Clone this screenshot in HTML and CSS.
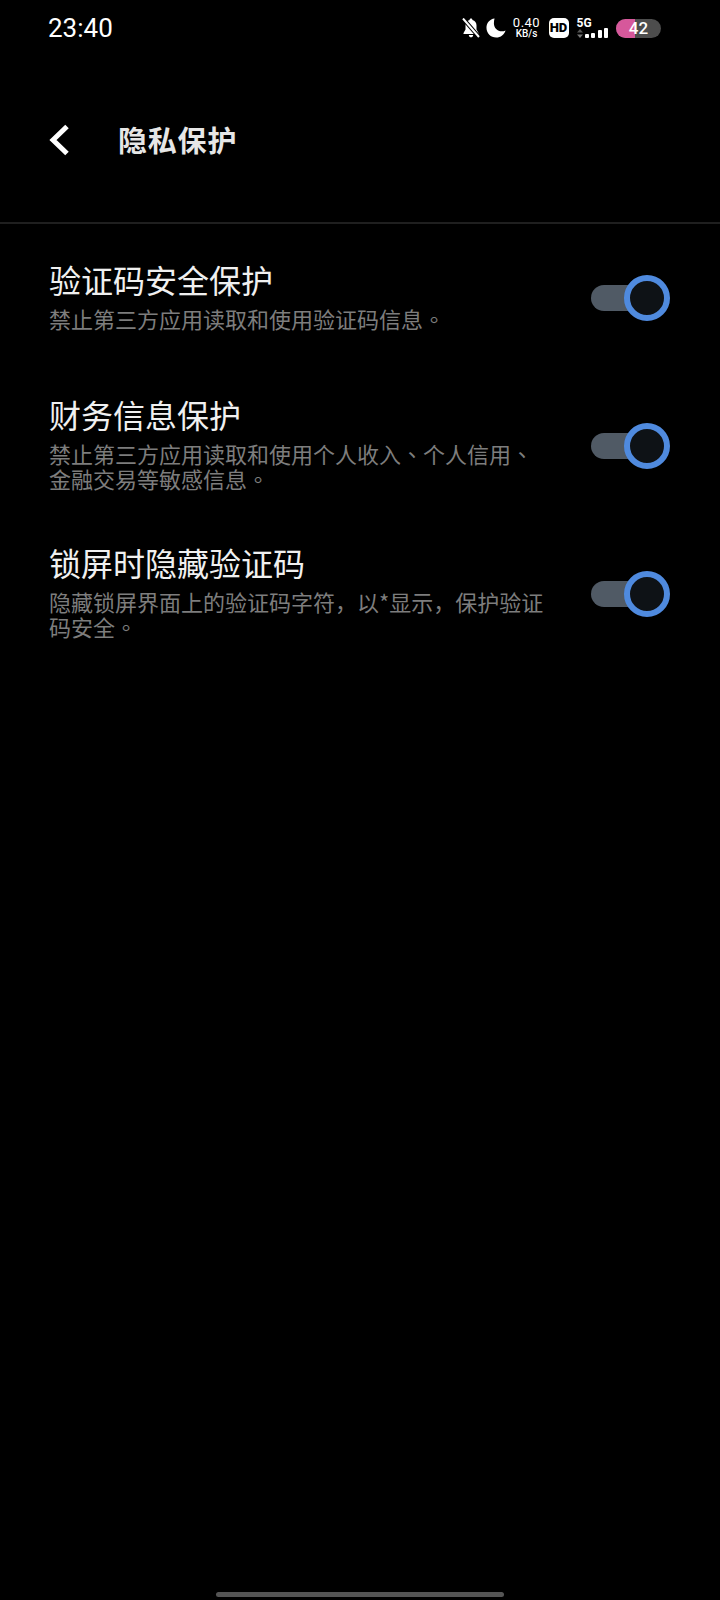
FILE: index.html
```html
<!DOCTYPE html>
<html lang="zh-CN">
<head>
    <meta charset="UTF-8">
    <title>隐私保护</title>
    <link rel="stylesheet" href="styles.css">
</head>
<body>

<!-- Status bar -->
<div class="status-bar">
    <span class="clock">23:40</span>
    <div class="status-icons">
        <svg class="icon-bell" width="18" height="20" viewBox="0 0 18 20">
            <path d="M9 .5c-.9 0-1.400.6-1.400 1.400C5 2.500 3.500 4.600 3.500 7.300v4.200L1.500 15v1h15v-1l-2-3.500V7.300c0-2.700-1.500-4.800-4.100-5.400C10.400 1.100 9.900.5 9 .5zM6.800 17c.2 1.400 1 2.300 2.200 2.300s2-.9 2.200-2.300z" fill="#fff"/>
            <path d="M1 .5L17 19" stroke="#000" stroke-width="4"/>
            <path d="M1 .5L17 19" stroke="#fff" stroke-width="2"/>
        </svg>
        <svg class="icon-moon" width="20" height="20" viewBox="0 0 21 21">
            <path d="M9 .5C4 1 .5 5.200.5 10.200.5 15.900 5 20.500 10.700 20.500c4.700 0 8.600-3.100 9.800-7.400-1.200.6-2.500.9-3.900.9C12 14 8.300 10.300 8.300 5.700 8.300 3.800 8.500 2 9 .5z" fill="#fff"/>
        </svg>
        <div class="net-speed">
            <span class="speed-value">0.40</span>
            <span class="speed-unit">KB/s</span>
        </div>
        <div class="hd-badge">HD</div>
        <div class="signal">
            <div class="signal-left">
                <span class="signal-5g">5G</span>
                <svg width="6" height="9" viewBox="0 0 6 9">
                    <path d="M3 0L6 3.500H0z" fill="#555"/>
                    <path d="M3 9L6 5.500H0z" fill="#777"/>
                </svg>
            </div>
            <div class="signal-bars">
                <span class="bar bar-1"></span>
                <span class="bar bar-2"></span>
                <span class="bar bar-3"></span>
                <span class="bar bar-4"></span>
            </div>
        </div>
        <div class="battery">
            <div class="battery-fill"></div>
            <span class="battery-text">42</span>
        </div>
    </div>
</div>

<!-- Header -->
<header class="page-header">
    <svg class="back-icon" width="22" height="32" viewBox="0 0 22 32">
        <path d="M19 2.500L5 16L19 29.500" fill="none" stroke="#fff" stroke-width="5"/>
    </svg>
    <h1>隐私保护</h1>
</header>

<!-- Settings list -->
<div class="settings-list">
    <div class="setting-row">
        <div class="setting-text">
            <h3>验证码安全保护</h3>
            <p>禁止第三方应用读取和使用验证码信息<span class="punct" lang="zh-TW">。</span></p>
        </div>
        <div class="switch"><span class="knob"></span></div>
    </div>
    <div class="setting-row">
        <div class="setting-text">
            <h3>财务信息保护</h3>
            <p>禁止第三方应用读取和使用个人收入<span class="punct" lang="zh-TW">、</span>个人信用<span class="punct" lang="zh-TW">、</span>金融交易等敏感信息<span class="punct" lang="zh-TW">。</span></p>
        </div>
        <div class="switch"><span class="knob"></span></div>
    </div>
    <div class="setting-row">
        <div class="setting-text">
            <h3>锁屏时隐藏验证码</h3>
            <p>隐藏锁屏界面上的验证码字符，以*显示，保护验证码安全<span class="punct" lang="zh-TW">。</span></p>
        </div>
        <div class="switch"><span class="knob"></span></div>
    </div>
</div>

<div class="home-bar"></div>

</body>
</html>
```

FILE: styles.css
```css
/* Global Styles */
* {
    margin: 0;
    padding: 0;
    box-sizing: border-box;
}

body {
    width: 720px;
    height: 1600px;
    position: relative;
    overflow: hidden;
    background-color: #000;
    color: #fff;
    font-family: "Noto Sans CJK SC", "Noto Sans", sans-serif;
}

/* Status bar */
.status-bar {
    height: 56px;
    padding: 0 59px 0 48px;
    display: flex;
    justify-content: space-between;
    align-items: center;
}

.clock {
    font-family: Roboto, sans-serif;
    font-size: 26px;
}

.status-icons {
    display: flex;
    align-items: center;
}

.icon-bell {
    margin-right: 6px;
}

.icon-moon {
    margin-right: 8px;
}

.net-speed {
    width: 26px;
    margin-right: 9px;
    display: flex;
    flex-direction: column;
    align-items: center;
    font-family: Roboto, sans-serif;
    line-height: 1;
}

.speed-value {
    font-size: 13px;
    letter-spacing: 0.5px;
    height: 12px;
    line-height: 12px;
}

.speed-unit {
    font-size: 10px;
    font-weight: 500;
}

.hd-badge {
    width: 20px;
    height: 20px;
    margin-right: 8px;
    border-radius: 5px;
    background-color: #fff;
    color: #000;
    font-family: Roboto, sans-serif;
    font-size: 13px;
    font-weight: 900;
    line-height: 20px;
    text-align: center;
}

.signal {
    display: flex;
    align-items: flex-end;
    margin-right: 8px;
}

.signal-left {
    width: 8px;
    display: flex;
    flex-direction: column;
    align-items: flex-start;
}

.signal-5g {
    font-family: Roboto, sans-serif;
    font-size: 12px;
    font-weight: 700;
    line-height: 11px;
    white-space: nowrap;
}

.signal-bars {
    display: flex;
    align-items: flex-end;
    gap: 2.5px;
}

.bar {
    width: 4px;
    background-color: #fff;
    border-radius: 1px;
}

.bar-1 {
    height: 4px;
}

.bar-2 {
    height: 5px;
}

.bar-3 {
    height: 8px;
}

.bar-4 {
    height: 10px;
}

.battery {
    width: 45px;
    height: 19px;
    position: relative;
    border-radius: 10px;
    overflow: hidden;
    background-color: #4d4d4d;
}

.battery-fill {
    width: 42%;
    height: 100%;
    background-color: #d6589b;
}

.battery-text {
    position: absolute;
    top: 0;
    left: 0;
    width: 100%;
    font-family: Roboto, sans-serif;
    font-size: 17px;
    font-weight: 500;
    line-height: 19px;
    text-align: center;
}

/* Header */
.page-header {
    height: 168px;
    padding: 2px 0 0 48px;
    display: flex;
    align-items: center;
    border-bottom: 2px solid #1f1f1f;
}

.back-icon {
    margin-right: 48px;
}

.page-header h1 {
    font-size: 29px;
    font-weight: 700;
    letter-spacing: 0.8px;
    color: #e6e6e6;
    margin-bottom: 2px;
}

/* Settings list */
.setting-row {
    height: 148px;
    padding: 0 58px 0 49px;
    display: flex;
    justify-content: space-between;
    align-items: center;
}

.setting-text {
    width: 500px;
    padding-bottom: 9px;
}

.setting-text h3 {
    font-size: 32px;
    font-weight: 400;
    line-height: 44px;
    color: #f0f0f0;
    margin-bottom: 5px;
}

.setting-text p {
    font-size: 22px;
    line-height: 25px;
    color: #7d7d7d;
}

/* 、and 。sit near the middle of their cell in the reference */
.punct {
    font-family: "Noto Sans CJK TC", sans-serif;
}

/* Toggle */
.switch {
    width: 71px;
    height: 26px;
    position: relative;
    border-radius: 13px 0 0 13px;
    background-color: #505a65;
}

.knob {
    position: absolute;
    top: -10px;
    right: -8px;
    width: 46px;
    height: 46px;
    border: 6px solid #4f8ade;
    border-radius: 50%;
    background-color: #0e1216;
}

/* Home indicator */
.home-bar {
    position: absolute;
    left: 216px;
    bottom: 3px;
    width: 288px;
    height: 5px;
    border-radius: 3px;
    background-color: #555;
}
```
